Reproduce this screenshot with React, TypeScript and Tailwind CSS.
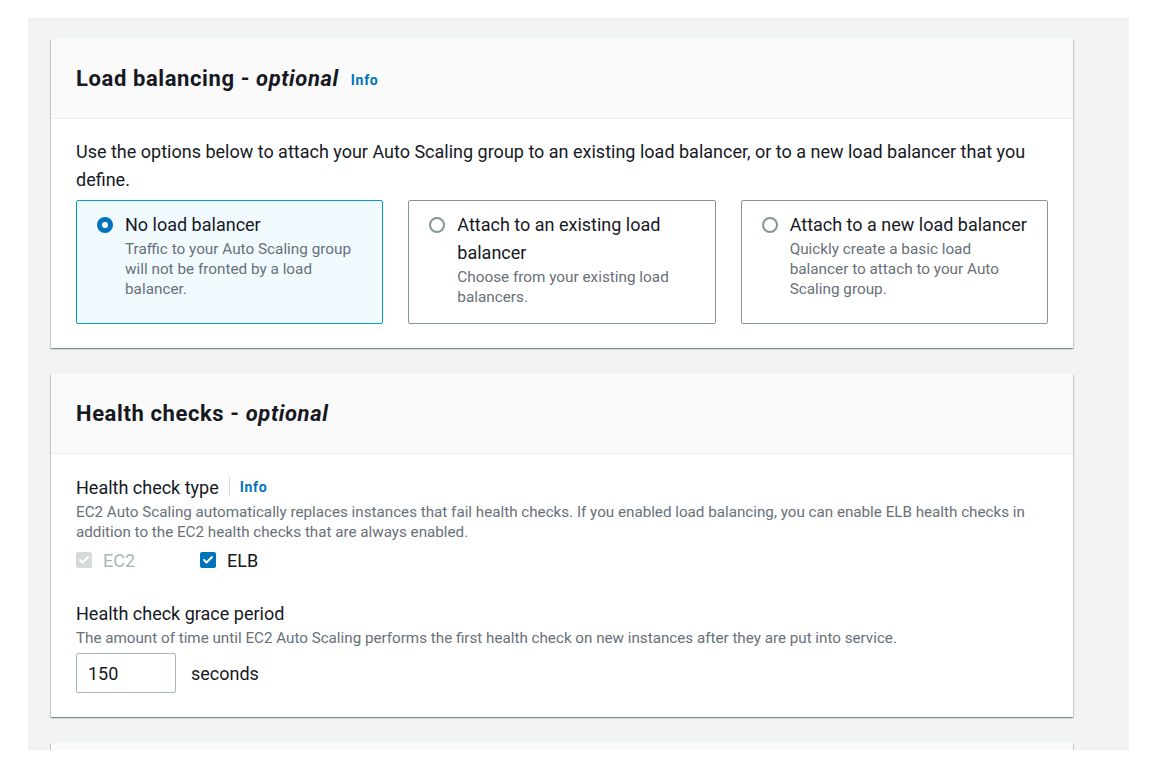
import { Check } from 'lucide-react';

const font = { fontFamily: 'Roboto, "Liberation Sans", sans-serif' };
const cardShadow = 'bg-white shadow-[0_1px_1px_0_rgba(0,28,36,0.3),1px_1px_1px_0_rgba(0,28,36,0.15),-1px_1px_1px_0_rgba(0,28,36,0.15)]';

function Info({ className = '' }: { className?: string }) {
    return <span className={`text-[14px] tracking-[0.7px] font-bold text-[#0073bb] ${className}`}>Info</span>;
}

function Card({ title, info, children }: { title: string; info?: boolean; children: React.ReactNode }) {
    return (
        <section className={cardShadow}>
            <header className="h-[80px] bg-[#fafafa] border-b border-[#eaeded] px-[25px] flex items-center">
                <h2 className="text-[22px] tracking-[0.6px] font-bold text-[#16191f] leading-none">
                    {title} - <i>optional</i>
                </h2>
                {info && <Info className="ml-[12px] mt-[3px]" />}
            </header>
            {children}
        </section>
    );
}

const options = [
    { label: 'No load balancer', desc: 'Traffic to your Auto Scaling group will not be fronted by a load balancer.', selected: true },
    { label: 'Attach to an existing load balancer', desc: 'Choose from your existing load balancers.', selected: false },
    { label: 'Attach to a new load balancer', desc: 'Quickly create a basic load balancer to attach to your Auto Scaling group.', selected: false },
];

function Radio({ on }: { on: boolean }) {
    return on ? (
        <span className="mt-[6px] shrink-0 w-4 h-4 rounded-full bg-[#0073bb] flex items-center justify-center">
            <span className="w-[6px] h-[6px] rounded-full bg-white" />
        </span>
    ) : (
        <span className="mt-[6px] shrink-0 w-4 h-4 rounded-full border-2 border-[#879596] bg-white" />
    );
}

export default function App() {
    return (
        <div className="h-[770px] bg-white overflow-hidden" style={font}>
            <div className="ml-[28px] mt-[18px] w-[1101px] h-[732px] bg-[#f2f3f3] overflow-hidden pt-[21px] pl-[23px]">
                <div className="w-[1022px] flex flex-col gap-[26px]">
                    <Card title="Load balancing" info>
                        <div className="px-[25px] pt-[19px] pb-[24px]">
                            <p className="text-[18px] leading-[28px] text-[#16191f]">
                                Use the options below to attach your Auto Scaling group to an existing load balancer, or to a new load balancer that you define.
                            </p>
                            <div className="mt-[6px] grid grid-cols-3 gap-[25px]">
                                {options.map((o) => (
                                    <div
                                        key={o.label}
                                        className={`rounded-[2px] border flex gap-[12px] pl-[20px] pr-[15px] pt-[10px] pb-[16px] ${o.selected ? 'border-[#00a1c9] bg-[#f1faff]' : 'border-[#879596] bg-white'}`}
                                    >
                                        <Radio on={o.selected} />
                                        <div>
                                            <div className="text-[18px] leading-[28px] text-[#16191f]">{o.label}</div>
                                            <div className="pr-[5px] text-[15.3px] leading-[20px] text-[#687078]">{o.desc}</div>
                                        </div>
                                    </div>
                                ))}
                            </div>
                        </div>
                    </Card>

                    <Card title="Health checks">
                        <div className="px-[25px] pt-[21px] pb-[24px] text-[#16191f]">
                            <div className="flex items-center h-[24px]">
                                <span className="text-[18px]">Health check type</span>
                                <span className="mx-[10px] h-[20px] border-l border-[#d5dbdb]" />
                                <Info />
                            </div>
                            <p className="mt-[3px] text-[15.2px] leading-[20px] text-[#687078]">
                                EC2 Auto Scaling automatically replaces instances that fail health checks. If you enabled load balancing, you can enable ELB health checks in addition to the EC2 health checks that are always enabled.
                            </p>
                            <div className="mt-[6px] flex items-center h-[24px] text-[18px]">
                                <div className="w-[124px] flex items-center">
                                    <span className="w-4 h-4 rounded-[2px] bg-[#d5dbdb] flex items-center justify-center">
                                        <Check className="w-3 h-3 text-white" strokeWidth={4} />
                                    </span>
                                    <span className="ml-[11px] text-[#aab7b8]">EC2</span>
                                </div>
                                <span className="w-4 h-4 rounded-[2px] bg-[#0073bb] flex items-center justify-center">
                                    <Check className="w-3 h-3 text-white" strokeWidth={4} />
                                </span>
                                <span className="ml-[11px]">ELB</span>
                            </div>
                            <div className="mt-[30px] text-[18px] leading-[24px]">Health check grace period</div>
                            <p className="text-[15.2px] leading-[20px] text-[#687078] mt-[2px]">
                                The amount of time until EC2 Auto Scaling performs the first health check on new instances after they are put into service.
                            </p>
                            <div className="mt-[5px] flex items-center">
                                <div className="w-[100px] h-[40px] rounded-[2px] border border-[#aab7b8] flex items-center px-[11px] text-[18px]">150</div>
                                <span className="ml-[15px] text-[18px]">seconds</span>
                            </div>
                        </div>
                    </Card>

                    {/* next section, only its top edge is in view */}
                    <section className={cardShadow}>
                        <div className="h-[80px] bg-[#fafafa] border-b border-[#eaeded]" />
                    </section>
                </div>
            </div>
        </div>
    );
}
